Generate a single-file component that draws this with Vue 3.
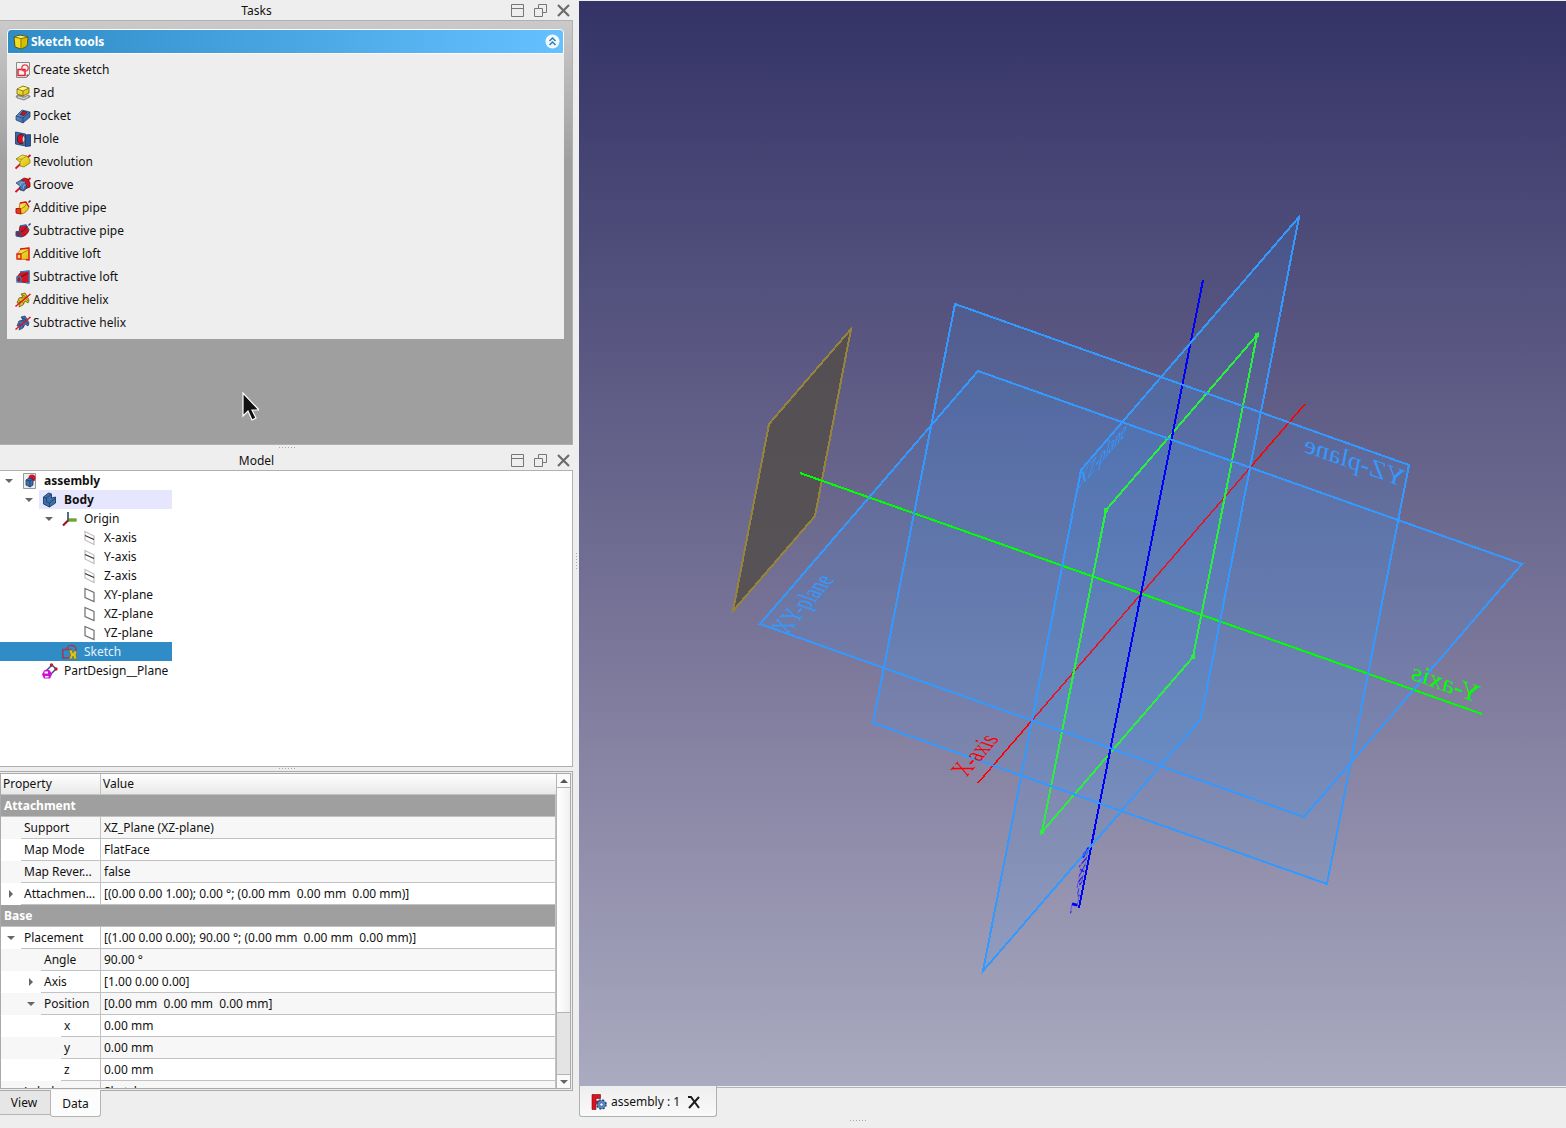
<script setup>
const tools = [
  { icon: 'create-sketch', label: 'Create sketch' },
  { icon: 'pad', label: 'Pad' },
  { icon: 'pocket', label: 'Pocket' },
  { icon: 'hole', label: 'Hole' },
  { icon: 'revolution', label: 'Revolution' },
  { icon: 'groove', label: 'Groove' },
  { icon: 'add-pipe', label: 'Additive pipe' },
  { icon: 'sub-pipe', label: 'Subtractive pipe' },
  { icon: 'add-loft', label: 'Additive loft' },
  { icon: 'sub-loft', label: 'Subtractive loft' },
  { icon: 'add-helix', label: 'Additive helix' },
  { icon: 'sub-helix', label: 'Subtractive helix' },
]

const tree = [
  { depth: 0, icon: 'document', label: 'assembly', open: true, bold: true },
  { depth: 1, icon: 'body', label: 'Body', open: true, bold: true, active: true },
  { depth: 2, icon: 'origin', label: 'Origin', open: true },
  { depth: 3, icon: 'axis', label: 'X-axis' },
  { depth: 3, icon: 'axis', label: 'Y-axis' },
  { depth: 3, icon: 'axis', label: 'Z-axis' },
  { depth: 3, icon: 'plane', label: 'XY-plane' },
  { depth: 3, icon: 'plane', label: 'XZ-plane' },
  { depth: 3, icon: 'plane', label: 'YZ-plane' },
  { depth: 2, icon: 'sketch', label: 'Sketch', selected: true },
  { depth: 1, icon: 'datum', label: 'PartDesign__Plane' },
]

const properties = [
  { group: 'Attachment' },
  { depth: 1, name: 'Support', value: 'XZ_Plane (XZ-plane)', alt: true },
  { depth: 1, name: 'Map Mode', value: 'FlatFace' },
  { depth: 1, name: 'Map Rever...', value: 'false', alt: true },
  { depth: 1, name: 'Attachmen...', value: '[(0.00 0.00 1.00); 0.00 °; (0.00 mm  0.00 mm  0.00 mm)]', state: 'closed' },
  { group: 'Base' },
  { depth: 1, name: 'Placement', value: '[(1.00 0.00 0.00); 90.00 °; (0.00 mm  0.00 mm  0.00 mm)]', state: 'open' },
  { depth: 2, name: 'Angle', value: '90.00 °', alt: true },
  { depth: 2, name: 'Axis', value: '[1.00 0.00 0.00]', state: 'closed' },
  { depth: 2, name: 'Position', value: '[0.00 mm  0.00 mm  0.00 mm]', alt: true, state: 'open' },
  { depth: 3, name: 'x', value: '0.00 mm' },
  { depth: 3, name: 'y', value: '0.00 mm', alt: true },
  { depth: 3, name: 'z', value: '0.00 mm' },
  { depth: 1, name: 'Label', value: 'Sketch', alt: true },
]

const docks = { tasks: 'Tasks', model: 'Model' }
</script>

<template>
  <svg class="sprite" aria-hidden="true">
    <defs>
      <linearGradient id="yellow" x1="0" y1="0" x2="1" y2="1">
        <stop offset="0" stop-color="#fcf060" /><stop offset="1" stop-color="#d8b800" />
      </linearGradient>
      <linearGradient id="blue" x1="0" y1="0" x2="1" y2="1">
        <stop offset="0" stop-color="#6f9fd0" /><stop offset="1" stop-color="#2a5a9c" />
      </linearGradient>
    </defs>
    <symbol id="workbench" viewBox="0 0 16 16">
      <path d="M1 3l6-2 8 2-1 9-6 3-6-2z" fill="#f0dc20" stroke="#4a4000" stroke-width=".8" />
      <path d="M2 3l5-1 7 1-6 1z" fill="#fff48a" />
      <path d="M8.500 4.500l5.500-1-1 8.500-4.500 2z" fill="#d8bc00" />
      <path d="M8 4.500v10M1 3l7 1.500L15 3" fill="none" stroke="#6a5c00" stroke-width=".8" />
    </symbol>
    <symbol id="create-sketch" viewBox="0 0 16 16">
      <path d="M1.500 .5h13v12l-3 3h-10z" fill="#f4f4f4" stroke="#888" />
      <path d="M11.500 15.500v-3h3z" fill="#666" />
      <path d="M3 7.500h7v6H3z" fill="none" stroke="#e8202c" stroke-width="1.500" />
      <circle cx="10" cy="6" r="3.200" fill="none" stroke="#e8404c" stroke-width="1.300" />
    </symbol>
    <symbol id="pad" viewBox="0 0 16 16">
      <path d="M1 11l3-1 5 2 4-2 2 1v1l-6 3-7-2z" fill="#999" stroke="#666" stroke-width=".6" />
      <path d="M3 12l6 1.500 4-2" stroke="#e4e4e4" fill="none" />
      <path d="M2 4l6-3 6 2v5l-6 3-6-2z" fill="url(#yellow)" stroke="#5c5000" stroke-width=".7" />
      <path d="M3 4l5-2 5 1-5 2.500z" fill="#fff48a" />
      <path d="M2 4l6 2 6-3M8 6v5" fill="none" stroke="#6c6000" stroke-width=".7" />
    </symbol>
    <symbol id="pocket" viewBox="0 0 16 16">
      <path d="M1 8l6-6 8 2v5l-7 6-7-3z" fill="url(#blue)" stroke="#1c3a68" stroke-width=".7" />
      <path d="M1 8l7 2 7-6M8 10v5" fill="none" stroke="#1c3a68" stroke-width=".7" />
      <path d="M5 6.500L8 3l4 1.200L9 7.500z" fill="#d8101c" stroke="#1c2a4c" stroke-width=".7" />
    </symbol>
    <symbol id="hole" viewBox="0 0 16 16">
      <path d="M.5 1l10 2v12l-10-2z" fill="#3a6cab" stroke="#1c3a68" stroke-width=".8" />
      <path d="M10.500 4l5-.5V15l-5 .5z" fill="#2a5a9c" stroke="#1c3a68" stroke-width=".8" />
      <ellipse cx="6" cy="8" rx="3.700" ry="4.500" fill="#d8101c" stroke="#2a1a30" stroke-width=".8" />
      <path d="M9 4.500q-3 3.500 0 7.500 1.500-3.500 0-7.500" fill="#c4d6ea" />
    </symbol>
    <symbol id="revolution" viewBox="0 0 16 16">
      <path d="M.5 14.500L15.500 1" stroke="#d81020" stroke-width="1.800" />
      <path d="M1 5l6-4 5 1 3 4v3l-6 4-4-1 0-4z" fill="url(#yellow)" stroke="#8a7400" stroke-width=".7" />
      <path d="M5 8l2-3 5-3M1 5l6 0" fill="none" stroke="#9a8400" stroke-width=".7" />
    </symbol>
    <symbol id="groove" viewBox="0 0 16 16">
      <path d="M.5 15L15.500 1" stroke="#d81020" stroke-width="1.800" />
      <path d="M6 3l3-2 4 1 2 4v4l-5 2z" fill="#d81420" stroke="#5a0a18" stroke-width=".7" />
      <path d="M1 6l5-3 4 2 2 5-3 4-4-1 0-4z" fill="url(#blue)" stroke="#1c3a68" stroke-width=".7" />
      <path d="M5 9l1-3 4-1M8 12l1-4 2 0" fill="none" stroke="#a0c0e4" stroke-width=".7" />
    </symbol>
    <symbol id="add-pipe" viewBox="0 0 16 16">
      <path d="M5 3l6-1 3 5q-2 6-8 7l-2-5z" fill="url(#yellow)" stroke="#c85010" stroke-width=".8" />
      <path d="M5 3l6-1 3 5" fill="none" stroke="#d81020" stroke-width="1.300" />
      <path d="M1 8.500h4.500l.5 5.500-5-1z" fill="#d84018" stroke="#c01018" />
      <path d="M6 9q5-2 6-6" fill="none" stroke="#7a6800" stroke-width=".7" />
      <path d="M13.500 2.500l2-2" stroke="#5a1820" stroke-width="1.400" />
    </symbol>
    <symbol id="sub-pipe" viewBox="0 0 16 16">
      <path d="M5 3l6-1 3 5q-2 6-8 7l-2-5z" fill="#d01420" stroke="#701020" stroke-width=".8" />
      <path d="M5 3l6-1 3 5" fill="none" stroke="#3a6cab" stroke-width="1.300" />
      <path d="M1 8.500h4.500l.5 5.500-5-1z" fill="#703048" stroke="#28599c" />
      <path d="M6 9q5-2 6-6" fill="none" stroke="#5a0810" stroke-width=".7" />
      <path d="M13.500 2.500l2-2" stroke="#28406a" stroke-width="1.400" />
    </symbol>
    <symbol id="add-loft" viewBox="0 0 16 16">
      <path d="M2 8l4-5 8-1v12l-9-1-3-1z" fill="url(#yellow)" stroke="#d86010" stroke-width=".8" />
      <path d="M5 3l9-1v12l-3-.5" fill="none" stroke="#e01820" stroke-width="1.300" />
      <path d="M2 8h4v5H2z" fill="#f4dc30" stroke="#e01820" stroke-width="1.300" />
      <path d="M6 8l7-4" stroke="#8a7600" stroke-width=".8" />
    </symbol>
    <symbol id="sub-loft" viewBox="0 0 16 16">
      <path d="M2 8l4-5 8-1v12l-9-1-3-1z" fill="#d41420" stroke="#5a1830" stroke-width=".8" />
      <path d="M5 3l9-1v12l-3-.5" fill="none" stroke="#4474b4" stroke-width="1.300" />
      <path d="M2 8h4v5H2z" fill="#b01020" stroke="#4474b4" stroke-width="1.300" />
      <path d="M6 8l7-4" stroke="#5a0810" stroke-width=".8" />
    </symbol>
    <symbol id="add-helix" viewBox="0 0 16 16">
      <path d="M6 2l4-1 2 3 2 4-1 3-3-2-2 4-4 2 1-4-3 0 2-5 4-1z" fill="#dcc424" stroke="#5c5000" stroke-width=".7" />
      <path d="M6 6q5-1 7 3M4 9q4 0 5 3M7 3q3 0 4 3" fill="none" stroke="#6c6000" stroke-width=".7" />
      <path d="M.5 14.500L15.500 2" stroke="#e01020" stroke-width="1.500" />
    </symbol>
    <symbol id="sub-helix" viewBox="0 0 16 16">
      <path d="M6 2l4-1 2 3 2 4-1 3-3-2-2 4-4 2 1-4-3 0 2-5 4-1z" fill="#3f70ac" stroke="#1c3a68" stroke-width=".7" />
      <path d="M6 6q5-1 7 3M4 9q4 0 5 3M7 3q3 0 4 3" fill="none" stroke="#1c3a68" stroke-width=".7" />
      <path d="M.5 14.500L15.500 2" stroke="#e01020" stroke-width="1.500" />
    </symbol>
    <symbol id="document" viewBox="0 0 16 16">
      <path d="M1.500 .5h12v15h-12z" fill="#eee" stroke="#999" />
      <circle cx="10" cy="5" r="3.500" fill="#d81020" />
      <path d="M4 7l3-2 4 1v6l-3 2-4-2z" fill="#3f70ac" stroke="#1c3a68" stroke-width=".8" />
      <path d="M4 7l4 1 3-2M8 8v6" stroke="#1c3a68" stroke-width=".8" fill="none" />
    </symbol>
    <symbol id="body" viewBox="0 0 16 16">
      <path d="M1.500 5l5-4 3 1v4l4-1v6l-6 4-6-3z" fill="#3f70ac" stroke="#1c3a68" stroke-width=".9" />
      <path d="M1.500 5l3 1v4l3 1 6-5M4.500 6l5-4M7.500 11v4" stroke="#1c3a68" stroke-width=".8" fill="none" />
    </symbol>
    <symbol id="origin" viewBox="0 0 16 16">
      <path d="M6 1v8" stroke="#3c5c84" stroke-width="1.800" />
      <path d="M6 9h8.500" stroke="#3c6c18" stroke-width="3" />
      <path d="M7 9h7" stroke="#70c420" stroke-width="1.500" />
      <path d="M6 9.500l-5 5" stroke="#a01018" stroke-width="2.200" />
    </symbol>
    <symbol id="axis" viewBox="0 0 16 16">
      <path d="M3 1.500l9 4.500v8.500L3 10z" fill="none" stroke="#c4bcbc" stroke-width="1.200" />
      <path d="M3 5.500l9 4" stroke="#333" stroke-width="1.200" />
    </symbol>
    <symbol id="plane" viewBox="0 0 16 16">
      <path d="M3 1.500l9 4v9l-9-4z" fill="#fff" stroke="#707070" stroke-width="1.200" />
    </symbol>
    <symbol id="sketch" viewBox="0 0 16 16">
      <path d="M.8 5.500h8v8.500h-8zM5 5a4.500 4.500 0 1 1 9 2" fill="none" stroke="#a03a50" stroke-width="1.500" />
      <path d="M7 6q3 5 0 9l3 0 1-3 1 3h3q-2-4 0-8l-3 0-1 2-1-3z" fill="#e0c020" stroke="#7a6c20" stroke-width=".6" />
    </symbol>
    <symbol id="datum" viewBox="0 0 16 16">
      <path d="M5 7l5-5 4 4-5 5z" fill="#fff" stroke="#28599c" stroke-width="1.500" />
      <circle cx="9.500" cy="2" r="1.700" fill="#d01420" /><circle cx="14" cy="6" r="1.700" fill="#d01420" />
      <path d="M2 7.500l3-1 3 1 2 4-2 4H2l-2-4z" fill="#d010d0" />
      <path d="M2.500 8.500H6v2H2.500zM3 13h3.500v1.500H3z" fill="#fff" />
    </symbol>
    <symbol id="freecad" viewBox="0 0 16 16">
      <path d="M1 .5h8.500v4H5v2.500h3v3H5v5.500H1z" fill="#d81420" stroke="#7a0810" stroke-width=".6" />
      <circle cx="10.500" cy="10.500" r="4.300" fill="#4070b0" stroke="#2a4c84" stroke-dasharray="2 1.400" stroke-width="2" />
      <circle cx="10.500" cy="10.500" r="3.600" fill="#5c8cc4" />
      <circle cx="10.500" cy="10.500" r="1.600" fill="#fff" stroke="#2a4c84" stroke-width=".6" />
    </symbol>
    <symbol id="win-shade" viewBox="0 0 13 13">
      <path d="M.5 .5h12v12H.5zM.5 4.500h12" fill="none" stroke="#777" />
    </symbol>
    <symbol id="win-float" viewBox="0 0 13 13">
      <path d="M4.500 4V.5h8v8H9M.5 4.500h8v8h-8z" fill="none" stroke="#777" />
    </symbol>
    <symbol id="win-close" viewBox="0 0 13 13">
      <path d="M1 1l11 11M12 1L1 12" fill="none" stroke="#6c6c6c" stroke-width="2.200" />
    </symbol>
  </svg>

  <div class="window">
    <aside class="docks">
      <header class="dock-title">
        <h2>{{ docks.tasks }}</h2>
        <button aria-label="Collapse tasks"><svg><use href="#win-shade" /></svg></button>
        <button aria-label="Float tasks"><svg><use href="#win-float" /></svg></button>
        <button aria-label="Close tasks"><svg><use href="#win-close" /></svg></button>
      </header>
      <section class="tasks">
        <div class="toolbox">
          <button class="toolbox-head">
            <svg class="icon"><use href="#workbench" /></svg>
            <span>Sketch tools</span>
            <svg class="collapse" viewBox="0 0 15 15">
              <circle cx="7.500" cy="7.500" r="7" fill="#f4f8fb" />
              <path d="M4.500 7l3-3 3 3M4.500 11l3-3 3 3" fill="none" stroke="#2580bd" stroke-width="1.500" />
            </svg>
          </button>
          <div class="toolbox-body">
            <button v-for="t in tools" :key="t.icon" class="tool">
              <svg class="icon"><use :href="'#' + t.icon" /></svg>
              <span>{{ t.label }}</span>
            </button>
          </div>
        </div>
        <svg class="pointer" viewBox="0 0 18 30">
          <path d="M2 1v23l5-5 4 9 4-2-4-8h7z" fill="#111" stroke="#fff" stroke-width="1.200" />
        </svg>
      </section>

      <div class="splitter"><i class="dots"></i></div>

      <header class="dock-title">
        <h2>{{ docks.model }}</h2>
        <button aria-label="Collapse model"><svg><use href="#win-shade" /></svg></button>
        <button aria-label="Float model"><svg><use href="#win-float" /></svg></button>
        <button aria-label="Close model"><svg><use href="#win-close" /></svg></button>
      </header>
      <section class="model">
        <ul class="tree" role="tree">
          <li
            v-for="n in tree"
            :key="n.label"
            role="treeitem"
            :aria-selected="!!n.selected"
            :class="['d' + n.depth, { bold: n.bold, active: n.active, selected: n.selected }]"
          >
            <span class="twist"><i v-if="n.open" class="tri down"></i></span>
            <span class="node">
              <svg class="icon"><use :href="'#' + n.icon" /></svg>
              <span class="node-label">{{ n.label }}</span>
            </span>
          </li>
        </ul>
      </section>

      <div class="splitter thin"><i class="dots"></i></div>

      <section class="properties">
        <div class="prop-frame">
          <div class="prop-view">
            <table>
              <colgroup><col class="c-name" /><col /></colgroup>
              <thead>
                <tr><th>Property</th><th>Value</th></tr>
              </thead>
              <tbody>
                <template v-for="p in properties" :key="p.group || p.name">
                  <tr v-if="p.group" class="group"><th colspan="2">{{ p.group }}</th></tr>
                  <tr v-else :class="{ alt: p.alt }">
                    <td class="name">
                      <div class="name-row">
                        <span :class="['indent', 'i' + p.depth]"><i v-if="p.state" :class="['tri', p.state === 'open' ? 'down' : 'right']"></i></span>
                        <span class="name-text">{{ p.name }}</span>
                      </div>
                    </td>
                    <td class="value">{{ p.value }}</td>
                  </tr>
                </template>
              </tbody>
            </table>
          </div>
          <div class="scrollbar">
            <button aria-label="Scroll up"><i class="tri up"></i></button>
            <div class="thumb"></div>
            <div class="track"></div>
            <button aria-label="Scroll down"><i class="tri down"></i></button>
          </div>
        </div>
      </section>
      <nav class="tabs">
        <button>View</button>
        <button class="current">Data</button>
      </nav>
      <i class="side-dots"></i>
    </aside>

    <main class="work">
      <svg class="scene" viewBox="579 1 987 1085" preserveAspectRatio="xMidYMid slice">
        <g fill="#3399ff" fill-opacity=".13">
          <path d="M760 624L978 371l544 193-218 253z" />
          <path d="M955 304l454 161-82 419-454-161z" />
        </g>
        <path d="M1305 404L978 783" stroke="#f00" stroke-width="1.500" shape-rendering="crispEdges" />
        <path d="M1299 217l-98 502-218 252 98-501z" fill="#3399ff" fill-opacity=".13" />
        <path d="M851 329l-82 95-36 187 82-95z" fill="#524e4a" fill-opacity=".85" stroke="#96843a" stroke-width="2" shape-rendering="crispEdges" />
        <g fill="none" shape-rendering="crispEdges">
          <path d="M800 473l682 241" stroke="#0f0" stroke-width="2" />
          <path d="M1257 335l-151 175-64 322 151-175z" stroke="#28f03c" stroke-width="2" />
          <path d="M1203 280l-124 628" stroke="#0000fa" stroke-width="2" />
          <g stroke="#3399ff" stroke-width="2">
            <path d="M760 624L978 371l544 193-218 253z" />
            <path d="M955 304l454 161-82 419-454-161z" />
            <path d="M1299 217l-98 502-218 252 98-501z" />
          </g>
          <path d="M1255 333h4v4h-4zM1104 508h4v4h-4zM1040 830h4v4h-4zM1191 655h4v4h-4z" fill="#28f03c" />
        </g>
        <!-- labels lie in the datum planes, so each uses its plane's projected axes -->
        <g class="labels">
          <text class="plane-label" transform="matrix(.44 -.51 .943 .335 788 634)">XY-plane</text>
          <text class="plane-label" transform="matrix(-.93 -.33 -.17 .87 1403 487)">YZ-plane</text>
          <text class="plane-label" transform="matrix(.44 -.51 -.17 .87 1078 490)">XZ-plane</text>
          <text class="x-label" transform="matrix(.44 -.51 .943 .335 967 777)">X-axis</text>
          <text class="y-label" transform="matrix(-.943 -.335 -.17 .87 1478 703)">Y-axis</text>
          <text class="z-label" transform="matrix(.17 -.87 .41 -.48 1077 907)">Z-axis</text>
        </g>
      </svg>
      <nav class="doc-tabs">
        <div class="doc-tab">
          <svg class="icon"><use href="#freecad" /></svg>
          <span>assembly : 1</span>
          <button aria-label="Close document">
            <svg viewBox="0 0 13 13"><path d="M1 1h3l8 11M12 1L2 12" fill="none" stroke="#1c1c1c" stroke-width="2" /></svg>
          </button>
        </div>
        <div class="doc-rest"><i class="dots"></i></div>
      </nav>
    </main>
  </div>
</template>

<style>
body {
  margin: 0;
  background: #eee;
}
</style>

<style scoped>
.window {
  display: grid;
  grid-template-columns: 193fr 329fr;
  grid-template-rows: minmax(0, 1fr);
  height: 100vh;
  overflow: hidden;
  background: #eee;
  color: #111;
  font: 12px/18px "Noto Sans", sans-serif;
}
.sprite {
  position: absolute;
  width: 0;
  height: 0;
}
button {
  margin: 0;
  padding: 0;
  border: 0;
  background: none;
  color: inherit;
  font: inherit;
  text-align: left;
}
svg {
  display: block;
}
.icon {
  flex: none;
  width: 16px;
  height: 16px;
}
.docks {
  position: relative;
  display: grid;
  grid-template-columns: minmax(0, 1fr);
  grid-template-rows: 20px 425fr 6px 19px 297fr 4px 320fr 37px;
  padding-right: 6px;
}
.dock-title {
  display: flex;
  align-items: center;
  gap: 10px;
  padding-right: 3px;
}
.dock-title h2 {
  flex: 1;
  margin: 0 -10px 0 0;
  padding: 1px 0 0 2px;
  font: inherit;
  text-align: center;
}
.dock-title svg {
  width: 13px;
  height: 13px;
}
.tasks {
  position: relative;
  min-height: 0;
  overflow: hidden;
  box-sizing: border-box;
  padding: 8px 8px 0 7px;
  border: solid #b0b0b0;
  border-width: 1px 1px 1px 0;
  background: linear-gradient(#cacaca, #9f9f9f 140px);
}
.toolbox-head {
  display: flex;
  align-items: center;
  box-sizing: border-box;
  width: 100%;
  height: 25px;
  padding: 0 3px 0 5px;
  gap: 2px;
  border: 1px solid #fff;
  border-radius: 4px 4px 0 0;
  background: linear-gradient(90deg, #308cc6, #64c0ff);
  color: #fff;
  font-weight: 700;
}
.toolbox-head span {
  flex: 1;
}
.collapse {
  width: 15px;
  height: 15px;
}
.toolbox-body {
  padding: 4px 8px 5px;
  background: #eee;
}
.tool {
  display: flex;
  align-items: center;
  gap: 2px;
  width: 100%;
  height: 23px;
}
.pointer {
  position: absolute;
  left: 241px;
  top: 371px;
  width: 18px;
  height: 30px;
}
.splitter {
  display: flex;
  justify-content: center;
  padding-top: 2px;
}
.splitter.thin {
  padding-top: 1px;
}
.dots {
  width: 16px;
  height: 1px;
  background: repeating-linear-gradient(90deg, #aaa 0 1px, transparent 1px 3px);
}
.side-dots {
  position: absolute;
  right: 2px;
  top: 553px;
  width: 1px;
  height: 16px;
  background: repeating-linear-gradient(#aaa 0 1px, transparent 1px 3px);
}
.model {
  min-height: 0;
  overflow: hidden;
  box-sizing: border-box;
  border: solid #b0b0b0;
  border-width: 1px 1px 1px 0;
  background: #fff;
}
.tree {
  width: max-content;
  margin: 0;
  padding: 0;
  list-style: none;
}
.tree li {
  display: flex;
  height: 19px;
}
.tree .d1 {
  padding-left: 20px;
}
.tree .d2 {
  padding-left: 40px;
}
.tree .d3 {
  padding-left: 60px;
}
.twist {
  display: grid;
  place-items: center;
  width: 18px;
  margin-right: 1px;
}
.node {
  display: flex;
  flex: 1;
  align-items: center;
  gap: 6px;
  padding: 0 4px 0 3px;
}
.bold {
  font-weight: 700;
}
.active .node {
  background: #e6e6ff;
}
.selected {
  background: #308cc6;
  color: #e4f1fa;
}
.tri {
  width: 0;
  height: 0;
  border: 4px solid transparent;
}
.tri.down {
  border-top-color: #666;
  border-bottom-width: 0;
}
.tri.up {
  border-bottom-color: #555;
  border-top-width: 0;
}
.tri.right {
  margin-right: 2px;
  border-left-color: #666;
  border-right-width: 0;
}
.properties {
  display: flex;
  min-height: 0;
  box-sizing: border-box;
  padding: 1px 1px 1px 0;
  border: solid #aaa;
  border-width: 1px 1px 1px 0;
}
.prop-frame {
  display: flex;
  flex: 1;
  min-width: 0;
  border: 1px solid #aaa;
  background: #fff;
}
.prop-view {
  flex: 1;
  min-width: 0;
  overflow: hidden;
}
table {
  width: 100%;
  table-layout: fixed;
  border-spacing: 0;
}
.c-name {
  width: 100px;
}
th,
td {
  box-sizing: border-box;
  height: 22px;
  padding: 0;
  border-bottom: 1px solid #c2c2c2;
  line-height: 21px;
  text-align: left;
  font-weight: 400;
  white-space: pre;
}
thead th {
  height: 21px;
  padding-left: 2px;
  background: linear-gradient(#fff, #e8e8e8);
  line-height: 20px;
}
thead th:first-child {
  border-right: 1px solid #c2c2c2;
}
.group th {
  padding-left: 3px;
  border-right: 1px solid #c2c2c2;
  background: #9f9f9f;
  color: #fff;
  font-weight: 700;
}
.alt {
  background: #f7f7f7;
}
.name {
  border-right: 1px solid #c2c2c2;
  border-bottom: 0;
}
.name-row {
  display: flex;
  height: 22px;
}
.indent {
  display: flex;
  flex: none;
  align-items: center;
  justify-content: flex-end;
  box-sizing: border-box;
  padding-right: 6px;
}
.i1 {
  width: 20px;
}
.i2 {
  width: 40px;
}
.i3 {
  width: 60px;
}
.name-text {
  flex: 1;
  min-width: 0;
  padding-left: 3px;
  border-bottom: 1px solid #c2c2c2;
}
.value {
  padding-left: 3px;
  border-right: 1px solid #c2c2c2;
}
.scrollbar {
  display: flex;
  flex: none;
  flex-direction: column;
  width: 13px;
  border-left: 1px solid #b4b4b4;
}
.scrollbar button {
  display: grid;
  flex: none;
  place-items: center;
  height: 13px;
  background: #fafafa;
}
.thumb {
  flex: 225;
  border: solid #b4b4b4;
  border-width: 1px 0;
  background: linear-gradient(90deg, #fff, #f0f0f0);
}
.track {
  flex: 61;
  border-bottom: 1px solid #b4b4b4;
  background: #e4e4e4;
}
.tabs {
  display: flex;
  align-items: flex-start;
}
.tabs button {
  box-sizing: border-box;
  width: 50px;
  height: 24px;
  padding-right: 2px;
  border: solid #b4b4b4;
  border-width: 0 0 1px;
  background: #e6e6e6;
  text-align: center;
}
.tabs .current {
  width: 51px;
  height: 27px;
  margin-top: -1px;
  padding: 2px 0 0;
  border-width: 0 1px 1px;
  border-radius: 0 0 3px 3px;
  background: #fcfcfc;
}
.work {
  display: flex;
  flex-direction: column;
  min-width: 0;
  min-height: 0;
  padding-top: 1px;
}
.scene {
  flex: 1;
  width: 100%;
  min-height: 0;
  background: linear-gradient(#333366, #7b779a 60%, #aaaac0);
}
.labels {
  font: 28px "Liberation Serif", serif;
}
.plane-label {
  fill: #3399ff;
}
.x-label {
  fill: #f00;
}
.y-label {
  fill: #0f0;
}
.z-label {
  fill: #00f;
}
.doc-tabs {
  display: flex;
  flex: none;
  height: 42px;
}
.doc-tab {
  display: flex;
  align-items: center;
  box-sizing: border-box;
  height: 31px;
  padding: 2px 16px 0 11px;
  border: solid #b0b0b0;
  border-width: 0 1px 1px;
  border-radius: 0 0 3px 3px;
  background: linear-gradient(#eee, #fafafa);
}
.doc-tab span {
  margin: 0 7px 0 4px;
}
.doc-tab button svg {
  width: 13px;
  height: 13px;
}
.doc-rest {
  flex: 1;
  margin-top: 1px;
  border-top: 1px solid #b4b4b4;
}
.doc-rest .dots {
  display: block;
  margin: 32px 0 0 133px;
}
</style>
